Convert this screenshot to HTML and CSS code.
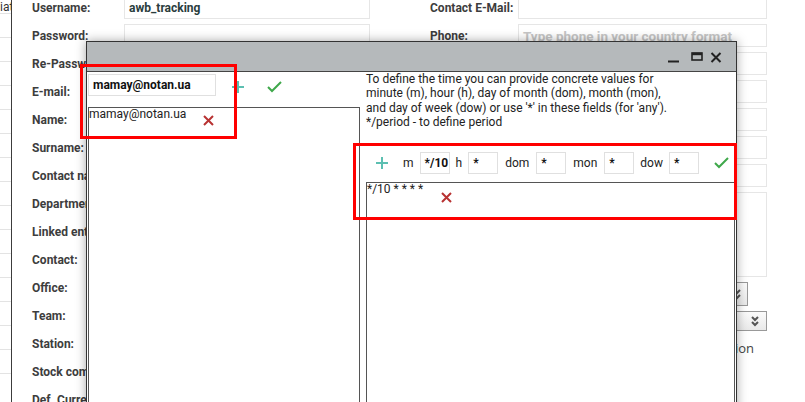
FILE: index.html
```html
<html>
    <head>
        <title>User settings</title>
        <link rel="stylesheet" href="styles.css">
    </head>
    <body>
        <div class="page">
            <div class="side">iat</div>
            <div class="form">
                <div class="col col-left">
                    <div class="row"><span class="label">Username:</span><span class="field value">awb_tracking</span></div>
                    <div class="row"><span class="label">Password:</span><span class="field"></span></div>
                    <div class="row"><span class="label">Re-Password:</span><span class="field"></span></div>
                    <div class="row"><span class="label">E-mail:</span><span class="field"></span></div>
                    <div class="row"><span class="label">Name:</span><span class="field"></span></div>
                    <div class="row"><span class="label">Surname:</span><span class="field"></span></div>
                    <div class="row"><span class="label">Contact name:</span><span class="field"></span></div>
                    <div class="row"><span class="label">Department:</span><span class="field"></span></div>
                    <div class="row"><span class="label">Linked entity:</span><span class="field"></span></div>
                    <div class="row"><span class="label">Contact:</span><span class="field"></span></div>
                    <div class="row"><span class="label">Office:</span><span class="field"></span></div>
                    <div class="row"><span class="label">Team:</span><span class="field"></span></div>
                    <div class="row"><span class="label">Station:</span><span class="field"></span></div>
                    <div class="row"><span class="label">Stock company:</span><span class="field"></span></div>
                    <div class="row"><span class="label">Def. Currency:</span><span class="field"></span></div>
                </div>
                <div class="col col-right">
                    <div class="row"><span class="label">Contact E-Mail:</span><span class="field"></span></div>
                    <div class="row"><span class="label">Phone:</span><span class="field placeholder">Type phone in your country format</span></div>
                    <div class="row"><span class="label">Fax:</span><span class="field"></span></div>
                    <div class="row"><span class="label">Skype:</span><span class="field"></span></div>
                    <div class="row"><span class="label">Position:</span><span class="field"></span></div>
                    <div class="row"><span class="label">Language:</span><span class="field"></span></div>
                    <div class="row"><span class="label">Timezone:</span><span class="field"></span></div>
                    <div class="row row-tall"><span class="label">Notes:</span><span class="field area"></span></div>
                    <div class="row row-select"><span class="label">Role:</span>
                        <span class="select select-short">
                            <svg width="8" height="11" viewBox="0 0 8 11"><path d="M1 1l3 3 3-3M1 6l3 3 3-3" fill="none" stroke="#555" stroke-width="2"/></svg>
                        </span>
                    </div>
                    <div class="row row-select2"><span class="label">Group:</span>
                        <span class="select">
                            <svg width="8" height="11" viewBox="0 0 8 11"><path d="M1 1l3 3 3-3M1 6l3 3 3-3" fill="none" stroke="#555" stroke-width="2"/></svg>
                        </span>
                    </div>
                    <div class="row"><span class="label"></span><span class="note">Send notification</span></div>
                </div>
            </div>
        </div>

        <div class="window">
            <div class="titlebar">
                <svg class="tb-min" width="12" height="12" viewBox="0 0 12 12"><path d="M0 10.5h11" stroke="#222" stroke-width="2"/></svg>
                <svg class="tb-max" width="12" height="12" viewBox="0 0 12 12"><rect x="1" y="2" width="10" height="7" fill="none" stroke="#222" stroke-width="1.6"/><path d="M1 3h10" stroke="#222" stroke-width="2.4"/></svg>
                <svg class="tb-close" width="12" height="12" viewBox="0 0 12 12"><path d="M1.5 2l9 9M10.5 2l-9 9" stroke="#222" stroke-width="2"/></svg>
            </div>
            <div class="winbody">
                <div class="panel panel-left">
                    <div class="addrow">
                        <span class="input email-input">mamay@notan.ua</span>
                        <svg class="ico-plus" width="12" height="12" viewBox="0 0 12 12"><path d="M6 0v12M0 6h12" stroke="#5cbfb1" stroke-width="2"/></svg>
                        <svg class="ico-check" width="15" height="12" viewBox="0 0 15 12"><path d="M1 6l4 4 9-9" fill="none" stroke="#3fa84b" stroke-width="2"/></svg>
                    </div>
                    <div class="listbox">
                        <div class="item">
                            <span class="item-text">mamay@notan.ua</span>
                            <svg class="ico-del" width="11" height="11" viewBox="0 0 11 11"><path d="M1 1l9 9M10 1l-9 9" stroke="#b83232" stroke-width="2"/></svg>
                        </div>
                    </div>
                </div>
                <div class="panel panel-right">
                    <div class="help">
                        To define the time you can provide concrete values for<br/>
                        minute (m), hour (h), day of month (dom), month (mon),<br/>
                        and day of week (dow) or use '*' in these fields (for 'any').<br/>
                        */period - to define period
                    </div>
                    <div class="cronrow">
                        <svg class="ico-plus" width="12" height="12" viewBox="0 0 12 12"><path d="M6 0v12M0 6h12" stroke="#5cbfb1" stroke-width="2"/></svg>
                        <span class="cron-label first">m</span>
                        <span class="input cron-input">*/10</span>
                        <span class="cron-label">h</span>
                        <span class="input cron-input">*</span>
                        <span class="cron-label wide">dom</span>
                        <span class="input cron-input">*</span>
                        <span class="cron-label wide">mon</span>
                        <span class="input cron-input">*</span>
                        <span class="cron-label">dow</span>
                        <span class="input cron-input">*</span>
                        <svg class="ico-check" width="15" height="12" viewBox="0 0 15 12"><path d="M1 6l4 4 9-9" fill="none" stroke="#3fa84b" stroke-width="2"/></svg>
                    </div>
                    <div class="listbox">
                        <div class="item">
                            <span class="item-text">*/10 * * * *</span>
                            <svg class="ico-del cron-del" width="11" height="11" viewBox="0 0 11 11"><path d="M1 1l9 9M10 1l-9 9" stroke="#b83232" stroke-width="2"/></svg>
                        </div>
                    </div>
                </div>
            </div>
        </div>

        <div class="mark mark-email"></div>
        <div class="mark mark-cron"></div>
    </body>
</html>
```

FILE: styles.css
```css
* {
  box-sizing: border-box;
}
body {
    margin: 0;
    width: 805px;
    height: 402px;
    overflow: hidden;
    position: relative;
    background-color: #fff;
    color: #222;
    font-family: Roboto, "Liberation Sans", sans-serif;
}
.page {
    display: flex;
    height: 402px;
}
.side {
    width: 12px;
    flex-shrink: 0;
    border-right: 1px solid #3c3c3c;
    overflow: hidden;
    white-space: nowrap;
    font-size: 12px;
    line-height: 14px;
    color: #333;
    background-image: repeating-linear-gradient(#fff 0, #fff 23px, #e3e3e3 23px, #e3e3e3 24px);
    background-position: 0 -10px;
}
.form {
    display: flex;
    margin-top: -4px;
    padding-left: 20px;
}
.col {
    display: flex;
    flex-direction: column;
    gap: 5px;
}
.row {
    display: flex;
    align-items: center;
    height: 23px;
}
.label {
    flex-shrink: 0;
    font-size: 12px;
    font-weight: bold;
    color: #3d3d3d;
    white-space: nowrap;
}
.col-left .label {
    width: 92px;
}
.col-left .field {
    width: 246px;
}
.col-right {
    margin-left: 60px;
}
.col-right .label {
    width: 88px;
}
.col-right .field {
    width: 249px;
}
.field {
    display: flex;
    align-items: center;
    height: 23px;
    padding: 0 4px;
    border: 1px solid #e6e6e6;
    font-size: 12px;
    font-weight: bold;
    color: #2a3d3d;
}
.placeholder {
    color: #c6c6c6;
    font-size: 13.5px;
}
.row-tall {
    height: 85px;
}
.area {
    height: 85px;
}
.row-select {
    height: 24px;
}
.row-select2 {
    height: 20px;
}
.select {
    display: flex;
    align-items: center;
    justify-content: flex-end;
    width: 249px;
    height: 100%;
    padding-right: 7px;
    border: 1px solid #999;
    background: linear-gradient(#fbfbfb, #e9e9e9);
}
.select-short {
    width: 230px;
    padding-right: 6px;
}
.note {
    width: 249px;
    text-align: right;
    padding-right: 13px;
    font-family: "Open Sans", sans-serif;
    font-size: 13px;
    color: #444;
}

/* dialog */
.window {
    position: absolute;
    left: 86px;
    top: 41px;
    width: 651px;
    height: 380px;
    border: 1px solid #333;
    background-color: #fff;
    box-shadow: 0 0 10px rgba(0, 0, 0, 0.35);
    display: flex;
    flex-direction: column;
}
.titlebar {
    display: flex;
    align-items: center;
    justify-content: flex-end;
    height: 30px;
    flex-shrink: 0;
    padding-right: 14px;
    background-color: #b5b9bb;
    border-bottom: 1px solid #444;
}
.tb-max {
    margin-left: 11px;
}
.tb-close {
    margin-left: 7px;
}
.winbody {
    flex: 1;
    display: flex;
    gap: 6px;
    padding: 0 1px;
}
.panel {
    display: flex;
    flex-direction: column;
}
.panel-left {
    width: 272px;
}
.panel-right {
    width: 369px;
}
.input {
    display: flex;
    align-items: center;
    height: 22px;
    border: 1px solid #e0e0e0;
    font-size: 12px;
    font-weight: bold;
    color: #111;
}
.addrow {
    display: flex;
    align-items: center;
    padding-top: 2px;
}
.email-input {
    width: 128px;
    padding-left: 4px;
}
.addrow .ico-plus {
    margin-left: 16px;
    margin-top: 4px;
}
.addrow .ico-check {
    margin-left: 23px;
    margin-top: 4px;
}
.listbox {
    flex: 1;
    border: 1px solid #555;
    margin-top: 11px;
}
.item {
    display: flex;
    align-items: flex-start;
    font-size: 12px;
    line-height: 12px;
    color: #222;
}
.ico-del {
    margin-left: 17px;
    margin-top: 7px;
}
.cron-del {
    margin-left: 18px;
    margin-top: 9px;
}
.help {
    font-size: 12px;
    line-height: 14.4px;
    color: #222;
}
.cronrow {
    display: flex;
    align-items: center;
    gap: 6px;
    margin-top: 22px;
    padding-left: 10px;
    font-size: 12px;
}
.cron-label.first {
    margin-left: 9px;
}
.cron-label.wide {
    margin-left: 1px;
    margin-right: 1px;
}
.cron-input {
    width: 30px;
    padding-left: 4px;
}
.cronrow .ico-check {
    margin-left: 9px;
}
.panel-right .listbox {
    margin-top: 8px;
}

/* annotation frames */
.mark {
    position: absolute;
    border: 3px solid #f00;
}
.mark-email {
    left: 80px;
    top: 64px;
    width: 157px;
    height: 75px;
}
.mark-cron {
    left: 353px;
    top: 143px;
    width: 384px;
    height: 77px;
}
```
